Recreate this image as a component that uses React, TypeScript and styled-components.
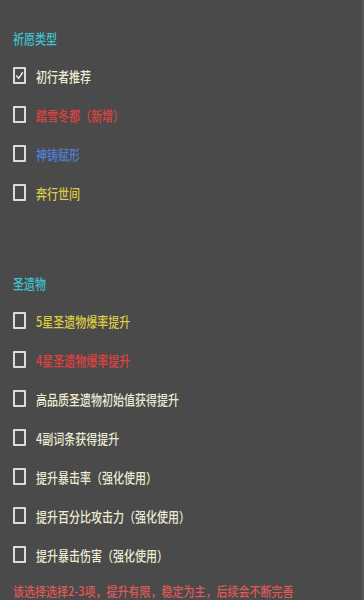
import React from "react"
import styled, { createGlobalStyle } from "styled-components"

const GlobalStyle = createGlobalStyle`
  html, body {
    margin: 0;
    padding: 0;
    background: #4a4a4a;
  }
  body {
    font-family: "Noto Sans CJK SC", "Noto Sans", sans-serif;
  }
`

type Tone = "light" | "red" | "blue" | "yellow"

interface Option {
  label: string
  tone: Tone
  checked?: boolean
}

const wishTypes: Option[] = [
  { label: "初行者推荐", tone: "light", checked: true },
  { label: "踏雪冬都（新增）", tone: "red" },
  { label: "神铸赋形", tone: "blue" },
  { label: "奔行世间", tone: "yellow" },
]

const artifacts: Option[] = [
  { label: "5星圣遗物爆率提升", tone: "yellow" },
  { label: "4星圣遗物爆率提升", tone: "red" },
  { label: "高品质圣遗物初始值获得提升", tone: "light" },
  { label: "4副词条获得提升", tone: "light" },
  { label: "提升暴击率（强化使用）", tone: "light" },
  { label: "提升百分比攻击力（强化使用）", tone: "light" },
  { label: "提升暴击伤害（强化使用）", tone: "light" },
]

const toneColors: Record<Tone, string> = {
  light: "#ecebd2",
  red: "#e2403f",
  blue: "#4f7fd6",
  yellow: "#dccb45",
}

export default function App() {
  return (
    <Page>
      <GlobalStyle />
      <Heading>祈愿类型</Heading>
      <List>
        {wishTypes.map((o) => (
          <Row key={o.label} {...o} />
        ))}
      </List>

      <Heading $gap={61}>圣遗物</Heading>
      <List>
        {artifacts.map((o) => (
          <Row key={o.label} {...o} />
        ))}
      </List>

      <Note>该选择选择2-3项，提升有限，稳定为主，后续会不断完善</Note>
    </Page>
  )
}

function Row({ label, tone, checked }: Option) {
  return (
    <Item>
      <Box>
        {checked && (
          <svg width="11" height="11" viewBox="0 0 11 11">
            <polyline
              points="1.5,5.5 4.5,9 9.5,1.5"
              fill="none"
              stroke="#ececec"
              strokeWidth="1.8"
            />
          </svg>
        )}
      </Box>
      <Label $color={toneColors[tone]}>{label}</Label>
    </Item>
  )
}

const Page = styled.div`
  height: 600px;
  overflow: hidden;
  padding: 28px 0 0 13px;
  box-sizing: border-box;
  background: #4a4a4a;
  border-right: 2px solid #575757;
`

const Heading = styled.div<{ $gap?: number }>`
  height: 20px;
  line-height: 20px;
  margin-top: ${(p) => p.$gap ?? 0}px;
  font-size: 11px;
  font-weight: 500;
  color: #3ec3cf;
  transform: scaleY(1.2);
  transform-origin: left center;
`

const List = styled.div`
  display: flex;
  flex-direction: column;
  margin-top: 8px;
`

const Item = styled.div`
  height: 39px;
  display: flex;
  align-items: center;
  gap: 10px;
`

const Box = styled.div`
  width: 13px;
  height: 17px;
  box-sizing: border-box;
  border: 2px solid #dcdcdc;
  border-radius: 1px;
  display: flex;
  align-items: center;
  justify-content: center;
  flex-shrink: 0;
`

const Label = styled.span<{ $color: string }>`
  font-size: 11px;
  font-weight: 500;
  color: ${(p) => p.$color};
  display: inline-block;
  transform: scaleY(1.25);
  transform-origin: left center;
  white-space: nowrap;
`

const Note = styled.div`
  margin-top: 6px;
  height: 20px;
  line-height: 20px;
  font-size: 11px;
  font-weight: 500;
  color: #e05858;
  white-space: nowrap;
  transform: scaleY(1.15);
  transform-origin: left center;
`
